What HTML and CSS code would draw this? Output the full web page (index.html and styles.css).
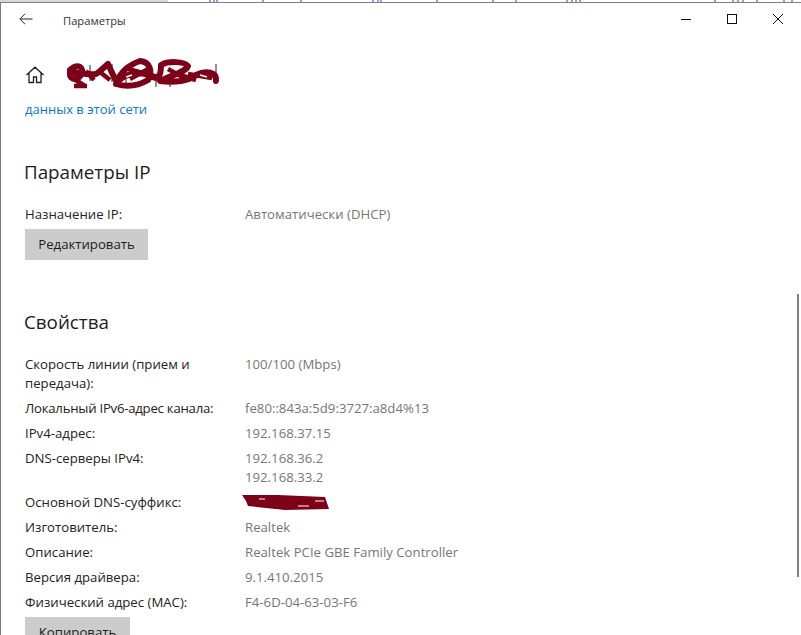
FILE: index.html
```html
<!DOCTYPE html>
<html lang="ru">
<head>
<meta charset="utf-8">
<title>Параметры</title>
<link rel="stylesheet" href="styles.css">
</head>
<body>
<svg class="topstrip" viewBox="0 0 801 3" width="801" height="3"><rect width="168" height="2" fill="#d6d6d6"/><path d="M210 0v2M214 0v2M217 0v2M263 0v2M301 0v2M373 0v2M378 0v2M381 0v2M437 0v2M493 0v2M516 0v2M567 0v2M572 0v2M576 0v2M580 0v2M715 0v2M733 0v2M738 0v2M743 0v2M757 0v2M784 0v2M792 0v2" stroke="#2a3fd0" stroke-width="1"/><rect y="2" width="801" height="1" fill="#808080"/></svg>
<div class="window">
  <header class="titlebar">
    <svg class="back" viewBox="0 0 14 12" width="14" height="12"><path d="M13.500 6H1M6 .8 .8 6 6 11.200" fill="none" stroke="#222" stroke-width="1"/></svg>
    <span class="apptitle">Параметры</span>
    <div class="controls">
      <svg viewBox="0 0 10 10" width="10" height="10"><path d="M0 5.500H10" stroke="#111" stroke-width="1"/></svg>
      <svg viewBox="0 0 10 10" width="10" height="10"><rect x=".5" y=".5" width="9" height="9" fill="none" stroke="#111"/></svg>
      <svg viewBox="0 0 10 10" width="10" height="10"><path d="M0 0 10 10M10 0 0 10" stroke="#111" stroke-width="1"/></svg>
    </div>
  </header>
  <main class="content">
    <div class="homerow">
      <svg class="home" viewBox="0 0 20 20" width="20" height="20"><path d="M1.500 10 10 2.200 18.500 10M4 8v9.500h4.500v-5.500h3v5.500H16V8" fill="none" stroke="#222" stroke-width="1.300"/></svg>
      <svg class="scribble" viewBox="0 0 170 40" width="170" height="40">
        <path d="M30 10V26M52 9V27M66 13V30M110 22V32M156 9V29M96 24V32" stroke="#222" stroke-width="1"/>
        <path d="M10 15C18 8 25 12 21 20 16 27 9 24 10 17 20 18 28 20 36 19 41 16 44 12 48 9 51 15 53 21 57 27 60 18 66 11 80 6 90 7 93 16 88 25 78 31 66 32 56 29 62 20 76 15 91 21 97 25 101 23 101 10 108 6 124 6 128 11 126 17 112 20 100 26 114 28 130 26 136 20 146 15 157 17 156 26 148 28 138 27" fill="none" stroke="#7d0019" stroke-width="6" stroke-linejoin="round" stroke-linecap="round"/>
        <path d="M14 24 25 31M14 31H27M26 16 34 25M40 17 50 25M68 14 98 22M70 24 90 13M108 14 126 24M128 19 152 23M120 20 136 25" stroke="#7d0019" stroke-width="4.500"/>
        <path d="M140 20 147 22M66 22 72 20M112 12 120 13" stroke="#fff" stroke-width="1.500"/>
      </svg>
    </div>
    <a class="link" href="#">данных в этой сети</a>

    <section class="ipsection">
      <h2 class="heading">Параметры IP</h2>
      <div class="row"><span class="label">Назначение IP:</span><span class="value">Автоматически (DHCP)</span></div>
      <button class="btn edit">Редактировать</button>
    </section>

    <section class="props">
      <h2 class="heading">Свойства</h2>
      <div class="grid">
        <span class="label">Скорость линии (прием и<br>передача):</span><span class="value">100/100 (Mbps)</span>
        <span class="label tight">Локальный IPv6-адрес канала:</span><span class="value">fe80::843a:5d9:3727:a8d4%13</span>
        <span class="label">IPv4-адрес:</span><span class="value">192.168.37.15</span>
        <span class="label">DNS-серверы IPv4:</span><span class="value">192.168.36.2<br>192.168.33.2</span>
        <span class="label">Основной DNS-суффикс:</span><span class="value"><svg class="scribble2" viewBox="0 0 105 30" width="105" height="30"><path d="M7 9 43 9 90 11 94 23 50 24 13 20 11 15Z" fill="#7d0019"/><path d="M24 13h6M63 20h11M80 15h9" stroke="#fff" stroke-width="1"/></svg></span>
        <span class="label">Изготовитель:</span><span class="value">Realtek</span>
        <span class="label">Описание:</span><span class="value">Realtek PCIe GBE Family Controller</span>
        <span class="label">Версия драйвера:</span><span class="value">9.1.410.2015</span>
        <span class="label">Физический адрес (MAC):</span><span class="value">F4-6D-04-63-03-F6</span>
      </div>
      <button class="btn copy">Копировать</button>
    </section>
  </main>
  <div class="scrollbar"></div>
</div>
</body>
</html>
```
FILE: styles.css
```css
* { box-sizing: border-box; }
html, body { margin: 0; height: 635px; overflow: hidden; background: #fff; }
body {
  font-family: "Open Sans", "Noto Sans", sans-serif;
  font-size: 13.200px;
  line-height: 19px;
  color: #222;
  display: flex;
  flex-direction: column;
}
.topstrip { display: block; height: 3px; flex: none; }
.window {
  position: relative;
  flex: 1;
  min-height: 0;
  border-left: 1px solid #7a7a7a;
  background: #fff;
  display: flex;
  flex-direction: column;
}
.titlebar { display: flex; align-items: center; height: 34px; flex: none; }
.back { margin-left: 18px; margin-top: -3px; }
.apptitle { margin-left: 30px; font-size: 11.200px; color: #333; }
.controls { margin-left: auto; display: flex; gap: 36px; margin-right: 18px; margin-top: -2px; align-items: center; }
.content { padding-left: 24px; flex: 1; min-height: 0; overflow: hidden; }
.homerow { display: flex; align-items: center; height: 40px; margin-top: 18px; }
.scribble { margin-left: 15px; flex: none; }
.link { display: block; color: #0a78c8; text-decoration: none; margin-top: 5px; font-size: 13px; }
.ipsection { margin-top: 40px; }
.heading { font-weight: 400; font-size: 18.800px; line-height: 26px; margin: 0 0 0 -1px; color: #1c1c1c; }
.row { display: grid; grid-template-columns: 220px 1fr; margin-top: 20px; }
.value { color: #767676; }
.btn {
  display: block;
  border: 0;
  background: #cccccc;
  font: inherit;
  color: #1c1c1c;
  padding: 0;
  height: 31px;
}
.edit { width: 123px; margin-top: 5px; }
.props { margin-top: 49px; }
.grid { display: grid; grid-template-columns: 220px 1fr; row-gap: 6px; margin-top: 20px; align-items: start; }
.label { white-space: nowrap; }
.tight { letter-spacing: -0.25px; }
.scribble2 { display: block; margin: -7px 0 -4px -10px; }
.copy { width: 105px; margin-top: 5px; }
.scrollbar { position: absolute; right: 2px; top: 291px; width: 2px; height: 283px; background: #7f7f7f; }
```
